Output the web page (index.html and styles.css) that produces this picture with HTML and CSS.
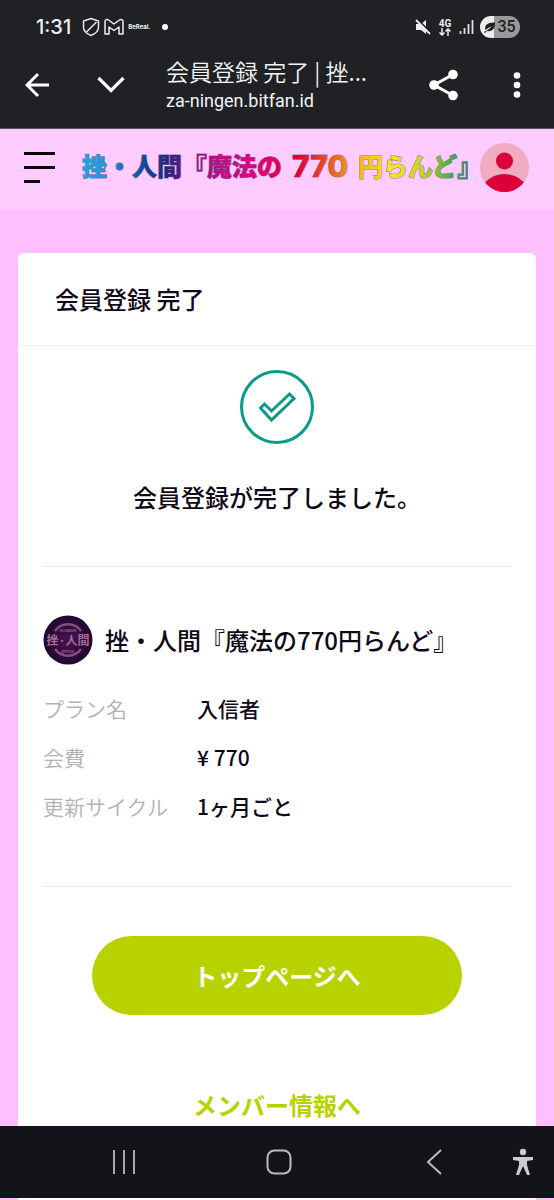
FILE: index.html
```html
<!DOCTYPE html>
<html lang="ja">
<head>
<meta charset="utf-8">
<meta name="viewport" content="width=device-width, initial-scale=1">
<title>会員登録 完了 | 挫・人間『魔法の770円らんど』</title>
<link rel="stylesheet" href="styles.css">
</head>
<body>
<div class="status-bar">
  <span class="clock">1:31</span>
  <svg class="status-icon" width="18" height="20" viewBox="0 0 18 20" fill="none" stroke="#eee" stroke-width="1.4"><path d="M9 1.5 16.5 4v6c0 4.500-3.500 7-7.500 8.500C5 17 1.500 14.500 1.500 10V4z"/><path d="M14.500 5 4.500 15"/></svg>
  <svg class="status-icon gmail" width="20" height="18" viewBox="0 0 20 18" fill="none" stroke="#eee" stroke-width="1.500" stroke-linejoin="round"><path d="M1 4C1 1.500 3 1 4.500 2L10 6 15.500 2C17 1 19 1.500 19 4V16h-4V9L10 12.500 5 9v7H1z"/></svg>
  <span class="bereal">BeReal.</span>
  <span class="status-dot"></span>
  <div class="status-right">
    <svg width="16" height="18" viewBox="0 0 16 18"><path d="M1 6h5l5-4v14l-5-4H1z" fill="#eee"/><path d="M1 0l15 15" stroke="#202124" stroke-width="2"/><path d="M1 2l14 14" stroke="#eee" stroke-width="1.800"/></svg>
    <span class="network"><span>4G</span><svg width="12" height="8" viewBox="0 0 12 8" fill="none" stroke="#eee" stroke-width="1.500"><path d="M3 0v7M.500 4.500 3 7l2.500-2.500M9 8V1M6.500 3.500 9 1l2.500 2.500"/></svg></span>
    <svg width="15" height="16" viewBox="0 0 15 16" stroke="#ddd" stroke-width="1.800"><path d="M1.500 12v3M5.500 9v6M9.500 5v10M13.500 1v14"/></svg>
    <span class="battery"><svg width="12" height="11" viewBox="0 0 12 11"><path d="M0 10C4 8 5 7 8 4 4 6 3 7 1.500 8 0 3 4 0 11 .500 11 6 9 10 3 9L1 11z" fill="#202124"/></svg><span>35</span></span>
  </div>
</div>
<div class="browser-bar">
  <button class="icon-button" aria-label="戻る"><svg width="26" height="26" viewBox="0 0 26 26" fill="none" stroke="#fff" stroke-width="3"><path d="M24 13H2M13 2 2 13l11 11"/></svg></button>
  <button class="icon-button" aria-label="閉じる"><svg width="28" height="18" viewBox="0 0 28 18" fill="none" stroke="#fff" stroke-width="3.200"><path d="M1.500 2 14 14.500 26.500 2"/></svg></button>
  <div class="page-info"><div class="page-title">会員登録 完了 | 挫...</div><div class="page-url">za-ningen.bitfan.id</div></div>
  <button class="icon-button share" aria-label="共有"><svg width="30" height="32" viewBox="0 0 30 32"><path d="M24 5.500 5 16 24 26.500" fill="none" stroke="#fff" stroke-width="3"/><g fill="#fff"><circle cx="5" cy="16" r="4.800"/><circle cx="24" cy="5.500" r="4.800"/><circle cx="24" cy="26.500" r="4.800"/></g></svg></button>
  <button class="icon-button" aria-label="メニュー"><svg width="8" height="26" viewBox="0 0 8 26" fill="#fff"><circle cx="4" cy="3.500" r="3.300"/><circle cx="4" cy="13" r="3.300"/><circle cx="4" cy="22.500" r="3.300"/></svg></button>
</div>
<header class="site-header">
  <button class="icon-button" aria-label="サイトメニュー"><svg width="32" height="32" viewBox="0 0 32 32" stroke="#0c0008" stroke-width="3"><path d="M0 2.500h31M0 16.500h31M0 30.500h16"/></svg></button>
  <a class="site-logo" href="#">
    <svg width="404" height="44" viewBox="0 0 404 44">
      <defs><linearGradient id="rainbow" gradientUnits="userSpaceOnUse" x1="0" y1="0" x2="392" y2="0"><stop offset="0" stop-color="#12aae2"/><stop offset=".06" stop-color="#2199d6"/><stop offset=".17" stop-color="#104296"/><stop offset=".22" stop-color="#28247f"/><stop offset=".28" stop-color="#6a1b82"/><stop offset=".35" stop-color="#b5128a"/><stop offset=".45" stop-color="#e4007f"/><stop offset=".55" stop-color="#e00034"/><stop offset=".63" stop-color="#e9531f"/><stop offset=".71" stop-color="#f6b51c"/><stop offset=".79" stop-color="#f6e61c"/><stop offset=".87" stop-color="#c4d52b"/><stop offset=".94" stop-color="#48b23b"/><stop offset="1" stop-color="#008a65"/></linearGradient></defs>
      <text class="logo-text" x="1" y="31">挫・人間『魔法の</text>
      <text class="logo-text logo-number" x="211" y="32">770</text>
      <text class="logo-text" x="277" y="31">円らんど』</text>
    </svg>
  </a>
  <button class="icon-button" aria-label="アカウント"><svg width="49" height="49" viewBox="0 0 49 49"><defs><clipPath id="avatar"><circle cx="24.500" cy="24.500" r="24.500"/></clipPath></defs><g clip-path="url(#avatar)"><path d="M0 0h49v49H0z" fill="#f2acc1"/><circle cx="24.500" cy="18" r="8.500" fill="#db003b"/><circle cx="24.500" cy="58" r="27" fill="#db003b"/></g></svg></button>
</header>
<main class="page">
  <section class="card">
    <h1 class="card-title">会員登録 完了</h1>
    <div class="card-body">
      <div class="result">
        <svg width="74" height="74" viewBox="0 0 74 74" fill="none" stroke="#0b9b88" stroke-width="3"><circle cx="37" cy="37" r="35.500"/><path d="m20.500 38 4-4 7 7 18-17 4.500 4.500-22.500 21.500z"/></svg>
        <p class="message">会員登録が完了しました。</p>
      </div>
      <div class="plan">
        <div class="club">
          <svg class="club-icon" width="50" height="50" viewBox="0 0 50 50" role="img"><defs><radialGradient id="purple"><stop offset="0" stop-color="#471353"/><stop offset="1" stop-color="#21082e"/></radialGradient></defs><circle cx="25" cy="25" r="24.500" fill="url(#purple)"/><g fill="none" stroke="#80507a"><path d="M12 16a16 16 0 0 1 26 0M12 34a16 16 0 0 0 26 0" stroke-width="2.500"/></g><g fill="#a86a91" text-anchor="middle" class="badge-text"><text x="25" y="17" font-size="3">ZA-NINGEN</text><text x="25" y="30" font-size="12">挫·人間</text><text x="25" y="38" font-size="3">OFFICIAL</text></g></svg>
          <h2 class="club-name">挫・人間『魔法の770円らんど』</h2>
        </div>
        <dl class="details">
          <dt>プラン名</dt><dd>入信者</dd>
          <dt>会費</dt><dd>¥ 770</dd>
          <dt>更新サイクル</dt><dd>1ヶ月ごと</dd>
        </dl>
      </div>
      <div class="actions">
        <a class="primary" href="#">トップページへ</a>
        <a class="secondary" href="#">メンバー情報へ</a>
      </div>
    </div>
  </section>
</main>
<nav class="system-nav">
  <button class="icon-button" aria-label="最近のアプリ"><svg width="24" height="26" viewBox="0 0 24 26" stroke="#aaa" stroke-width="2"><path d="M2 1v24M12 1v24M22 1v24"/></svg></button>
  <button class="icon-button" aria-label="ホーム"><svg width="26" height="26" viewBox="0 0 26 26" fill="none" stroke="#bbb" stroke-width="2"><rect x="1.500" y="1.500" width="23" height="23" rx="7"/></svg></button>
  <button class="icon-button" aria-label="前へ"><svg width="16" height="26" viewBox="0 0 16 26" fill="none" stroke="#bbb" stroke-width="2"><path d="M15 1 2 13l13 12"/></svg></button>
  <button class="icon-button assist" aria-label="ユーザー補助"><svg width="22" height="28" viewBox="0 0 22 28" fill="#ccc"><circle cx="11" cy="4" r="3.200"/><path d="M1 9h20v3l-6 1v4l3 10h-3l-4-9-4 9H4l3-10v-4l-6-1z"/></svg></button>
</nav>
</body>
</html>
```
FILE: styles.css
```css
* { box-sizing: border-box; }
body {
  margin: 0;
  background: #ffbfff;
  color: #100718;
  font-family: "Noto Sans CJK JP", sans-serif;
}
h1, h2, p, dl, dd { margin: 0; }
a { text-decoration: none; }
svg { display: block; flex: none; }
.icon-button {
  display: flex;
  flex: none;
  padding: 0;
  border: 0;
  background: none;
}
.status-bar {
  display: flex;
  align-items: center;
  height: 54px;
  padding: 0 34px 0 36px;
  background: #202124;
  color: #eee;
}
.clock {
  margin-right: 11px;
  font: 500 20px/24px Inter, sans-serif;
}
.gmail { margin: 0 4px; }
.bereal { font: 700 6px/8px Inter, sans-serif; }
.status-dot {
  width: 6px;
  height: 6px;
  margin-left: 12px;
  border-radius: 50%;
  background: #fff;
}
.status-right {
  display: flex;
  align-items: center;
  gap: 6px;
  margin-left: auto;
}
.network {
  display: flex;
  flex-direction: column;
  align-items: center;
  width: 16px;
  font: 700 10px/9px Roboto, sans-serif;
}
.battery {
  display: flex;
  align-items: center;
  justify-content: center;
  gap: 1px;
  width: 40px;
  height: 22px;
  border-radius: 11px;
  background: linear-gradient(90deg, #eee 35%, #999 35%);
  color: #202124;
  font: 500 16px/22px Roboto, sans-serif;
}
.browser-bar {
  display: flex;
  align-items: center;
  height: 75px;
  padding: 0 33px 12px 25px;
  border-bottom: 1px solid #604b65;
  background: #202124;
  color: #f4f4f4;
}
.browser-bar .icon-button + .icon-button { margin-left: 46px; }
.browser-bar .share { margin-right: 8px; }
.page-info {
  flex: 1;
  margin-left: 41px;
}
.page-title {
  font-size: 23px;
  font-weight: 350;
  line-height: 32px;
}
.page-url { font: 400 18px/28px Roboto, sans-serif; }
.site-header {
  display: flex;
  align-items: center;
  height: 81px;
  padding: 0 25px 5px 24px;
  background: #ffccff;
}
.site-logo {
  margin-left: auto;
  margin-right: -5px;
}
.logo-text {
  fill: url(#rainbow);
  stroke: #403050;
  stroke-width: 1px;
  stroke-opacity: 0.6;
  paint-order: stroke;
  font-size: 25px;
  font-weight: 900;
}
.logo-number {
  font-family: Inter, sans-serif;
  font-size: 30px;
  font-weight: 800;
}
.page { padding: 43px 18px 0; }
.card {
  border-radius: 6px 6px 0 0;
  background: #fff;
}
.card-title {
  padding: 28px 37px;
  border-bottom: 1px solid #eee;
  font-size: 24px;
  font-weight: 500;
  line-height: 36px;
}
.card-body { padding: 0 25px; }
.result {
  display: flex;
  flex-direction: column;
  align-items: center;
  gap: 34px;
  padding: 24px 0 50px;
}
.message {
  font-size: 24px;
  font-weight: 500;
  line-height: 38px;
}
.plan {
  padding: 48px 0 64px;
  border: solid #e9e9e9;
  border-width: 1px 0;
}
.club {
  display: flex;
  align-items: center;
  gap: 12px;
}
.club-name {
  font-size: 24px;
  font-weight: 500;
  line-height: 38px;
}
.badge-text {
  font-family: "Noto Sans CJK JP", sans-serif;
  font-weight: 700;
}
.details {
  display: grid;
  grid-template-columns: 154px 1fr;
  row-gap: 17px;
  margin-top: 27px;
  font-size: 21px;
  line-height: 32px;
}
.details dt {
  color: #b2b2b2;
  font-weight: 350;
}
.details dd { font-weight: 500; }
.actions {
  display: flex;
  flex-direction: column;
  align-items: center;
  gap: 70px;
  padding: 49px 49px 76px;
  font-size: 24px;
  font-weight: 700;
  line-height: 39px;
}
.primary {
  width: 100%;
  padding: 20px;
  border-radius: 40px;
  background: #b8d200;
  color: #fff;
  text-align: center;
}
.secondary { color: #b8d200; }
.system-nav {
  position: fixed;
  right: 0;
  bottom: 2px;
  left: 0;
  display: grid;
  grid-template-columns: 1fr 1fr 1fr;
  align-items: center;
  justify-items: center;
  height: 72px;
  padding: 0 43px 0 47px;
  background: #121419;
}
.assist {
  position: absolute;
  right: 20px;
}
```
